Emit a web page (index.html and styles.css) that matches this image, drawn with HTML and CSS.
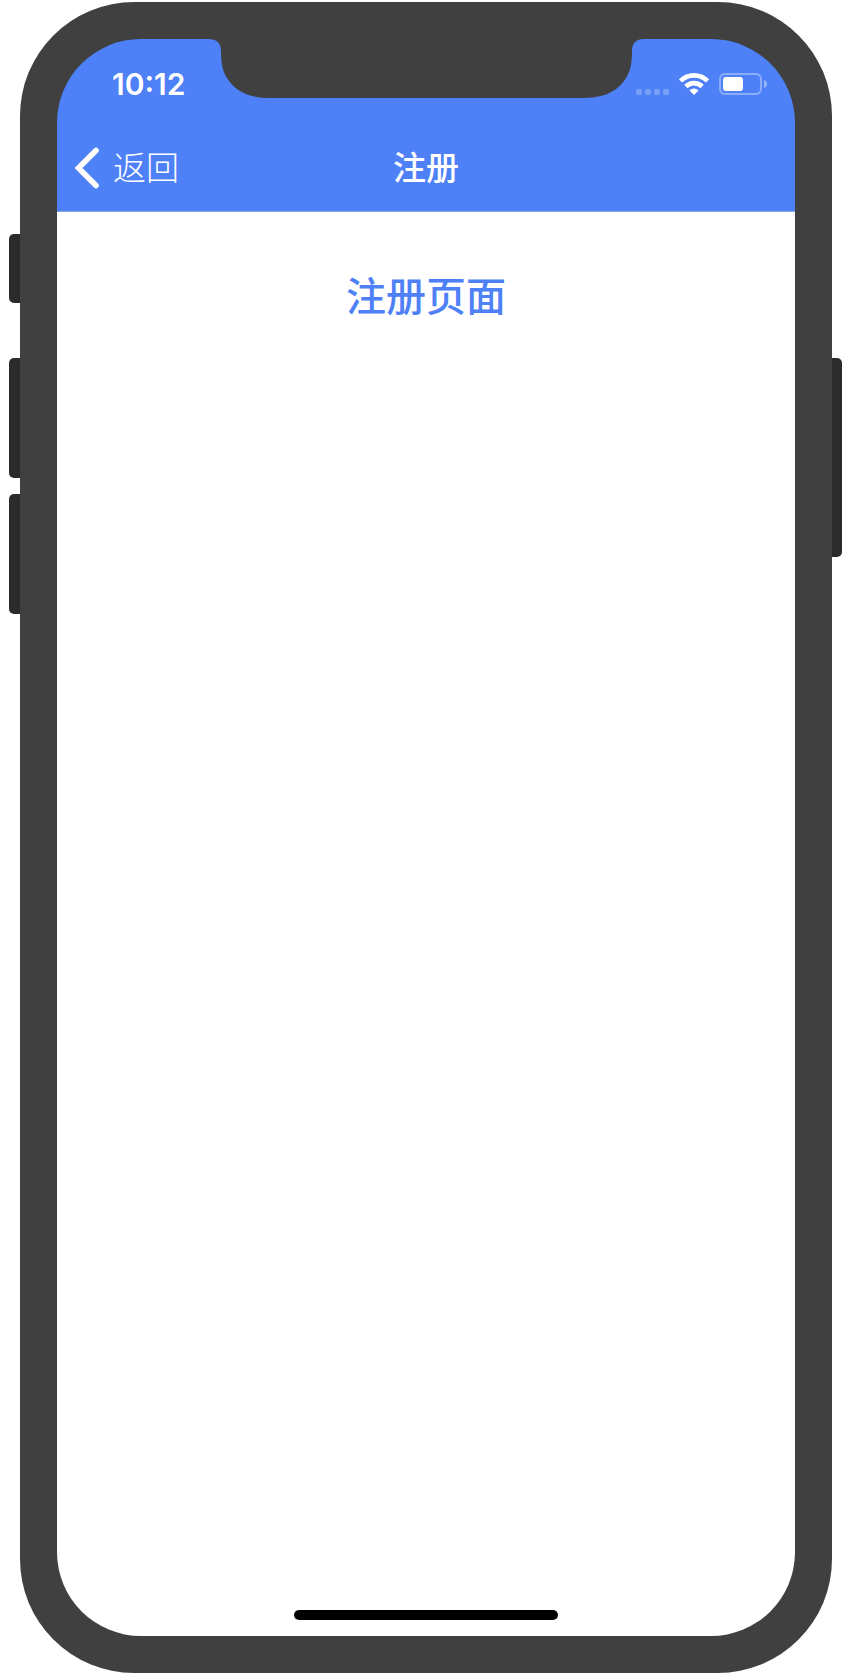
FILE: index.html
```html
<!DOCTYPE html>
<html lang="zh-CN">
<head>
  <meta charset="UTF-8" />
  <meta name="viewport" content="width=device-width, initial-scale=1.0"/>
  <title>注册</title>
  <link rel="stylesheet" href="styles.css">
</head>
<body>
  <div class="device">
    <div class="side-keys">
      <span class="key key-mute"></span>
      <span class="key key-volume"></span>
      <span class="key key-volume"></span>
    </div>

    <div class="phone">
      <div class="screen">
        <svg class="notch" width="436" height="59" viewBox="0 0 436 59" aria-hidden="true">
          <path fill="#404040" d="M0 0C9 0 13 4 13 12C13 26 15 34 21 42C31 55 44 59 64 59H373C393 59 406 55 416 42C422 34 424 26 424 12C424 4 428 0 436 0Z"/>
        </svg>

        <header class="header">
          <div class="status-bar">
            <span class="time">10:12</span>
            <div class="status-icons">
              <div class="signal"><i></i><i></i><i></i><i></i></div>
              <svg class="wifi" width="30" height="22" viewBox="0 0 30 22" aria-hidden="true">
                <g fill="none" stroke="#fff" stroke-width="4.600">
                  <path d="M1.500 8A19 19 0 0 1 28.500 8"/>
                  <path d="M6.900 13.500A11.500 11.500 0 0 1 23.100 13.500"/>
                </g>
                <path fill="#fff" d="M15 22L10.500 17.500C13 14.700 17 14.700 19.500 17.500Z"/>
              </svg>
              <svg class="battery" width="48" height="22" viewBox="0 0 48 22" aria-hidden="true">
                <rect x="1" y="1" width="41" height="20" rx="5" fill="none" stroke="#fff" stroke-opacity=".35" stroke-width="2"/>
                <rect x="4" y="4" width="20" height="14" rx="3" fill="#fff"/>
                <path fill="#fff" fill-opacity=".4" d="M45 7C49 8 49 14 45 15Z"/>
              </svg>
            </div>
          </div>

          <nav class="nav-bar">
            <a class="back" href="#">
              <svg width="24" height="42" viewBox="0 0 24 42" aria-hidden="true">
                <path d="M21 3.500L3.500 21L21 38.500" fill="none" stroke="#fff" stroke-width="5.600" stroke-linecap="round"/>
              </svg>
              <span>返回</span>
            </a>
            <span class="title">注册</span>
          </nav>
        </header>

        <main class="content">
          <h1>注册页面</h1>
          <div class="home-indicator"></div>
        </main>
      </div>
    </div>

    <div class="side-keys side-keys-right">
      <span class="key key-power"></span>
    </div>
  </div>
</body>
</html>
```
FILE: styles.css
```css
* {
  box-sizing: border-box;
}

body {
  margin: 0;
  background: #fff;
  font-family: Inter, "Noto Sans CJK SC", sans-serif;
}

.device {
  display: flex;
  min-height: 100vh;
  padding: 2px 10px 3px 9px;
}

.side-keys {
  display: flex;
  flex-direction: column;
  gap: 16px;
  width: 11px;
  padding-top: 232px;
}

.side-keys-right {
  width: 10px;
  padding-top: 356px;
}

.key {
  background: #2b2b2b;
  border-radius: 5px 0 0 5px;
}

.key-mute {
  height: 69px;
  margin-bottom: 39px;
}

.key-volume {
  height: 120px;
}

.key-power {
  height: 199px;
  border-radius: 0 5px 5px 0;
}

.phone {
  display: flex;
  flex: 1;
  padding: 37px;
  background: #404040;
  border-radius: 114px;
}

.screen {
  position: relative;
  display: flex;
  flex-direction: column;
  flex: 1;
}

/* lies over the blue header */
.notch {
  position: absolute;
  top: 0;
  left: 50%;
  transform: translateX(-50%);
}

.header {
  background: #4e80f7;
  border-bottom: 1px solid #8fa6dc;
  border-radius: 84px 84px 0 0;
  color: #fff;
}

.status-bar {
  display: flex;
  align-items: center;
  justify-content: space-between;
  height: 90px;
  padding: 0 28px 0 55px;
}

.time {
  font-size: 30px;
  font-weight: 600;
}

.status-icons {
  display: flex;
  align-items: flex-end;
  gap: 10px;
}

.signal {
  display: flex;
  gap: 3px;
}

.signal i {
  width: 6px;
  height: 6px;
  border-radius: 2px;
  background: rgba(255, 255, 255, 0.25);
}

.nav-bar {
  display: grid;
  grid-template-columns: 1fr auto 1fr;
  align-items: center;
  height: 82px;
  padding: 0 18px 4px;
}

.back {
  display: flex;
  align-items: center;
  gap: 14px;
  color: #fff;
  font-size: 33px;
  font-weight: 300;
  line-height: 42px;
  text-decoration: none;
}

.title {
  font-size: 33px;
  font-weight: 500;
  line-height: 42px;
}

.content {
  display: flex;
  flex-direction: column;
  align-items: center;
  justify-content: space-between;
  flex: 1;
  padding: 55px 0 16px;
  background: #fff;
  border-radius: 0 0 84px 84px;
}

h1 {
  margin: 0;
  color: #4e80f7;
  font-size: 40px;
  font-weight: 500;
  line-height: 60px;
}

.home-indicator {
  width: 264px;
  height: 10px;
  border-radius: 5px;
  background: #000;
}
```
